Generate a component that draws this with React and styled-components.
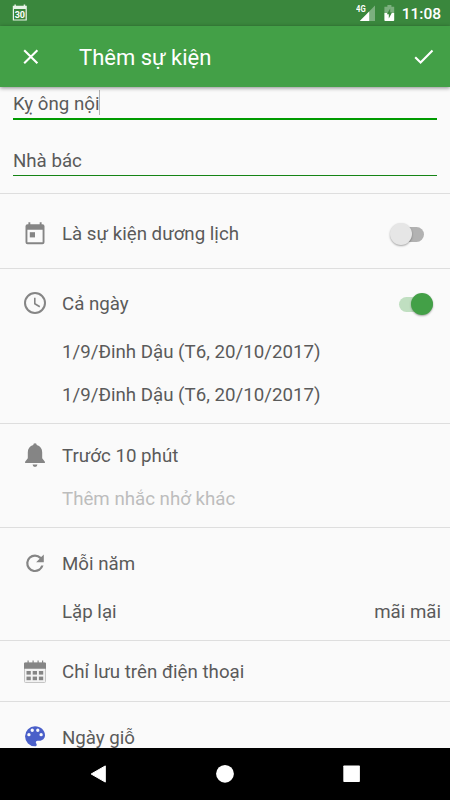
import React from "react";
import styled, { createGlobalStyle } from "styled-components";

const App = () => {
  return (
    <Screen>
      <GlobalStyle />
      <StatusBar>
        <CalendarStatusIcon />
        <StatusGroup>
          <SignalIcon />
          <BatteryIcon />
          <Clock>11:08</Clock>
        </StatusGroup>
      </StatusBar>

      <AppBar>
        <BarButton aria-label="Đóng">
          <svg width="16" height="16" viewBox="0 0 16 16">
            <path d="M1.2 1.2 14.4 14.2M14.4 1.2 1.2 14.2" stroke="#fff" strokeWidth="2.1" fill="none" />
          </svg>
        </BarButton>
        <BarTitle>Thêm sự kiện</BarTitle>
        <BarButton aria-label="Lưu">
          <svg width="20" height="16" viewBox="0 0 20 16">
            <path d="M1.2 8.2 6.6 13.5 18.5 1.6" stroke="#fff" strokeWidth="2.1" fill="none" />
          </svg>
        </BarButton>
      </AppBar>

      <Content>
        <Fields>
          <Field $height={33} $focused>
            <Text>Kỵ ông nội</Text>
            <Caret />
          </Field>
          <Field $height={56}>
            <Text>Nhà bác</Text>
          </Field>
        </Fields>

        <Section $height={75} $top={18}>
          <Row $height={44}>
            <IconSlot>
              <EventIcon />
            </IconSlot>
            <Text>Là sự kiện dương lịch</Text>
            <Switch />
          </Row>
        </Section>

        <Section $height={155} $top={13}>
          <Row $height={44}>
            <IconSlot>
              <ClockIcon />
            </IconSlot>
            <Text>Cả ngày</Text>
            <Switch $on />
          </Row>
          <Row $height={52}>
            <IconSlot />
            <Text>1/9/Đinh Dậu (T6, 20/10/2017)</Text>
          </Row>
          <Row $height={34}>
            <IconSlot />
            <Text>1/9/Đinh Dậu (T6, 20/10/2017)</Text>
          </Row>
        </Section>

        <Section $height={104} $top={9}>
          <Row $height={45}>
            <IconSlot>
              <BellIcon />
            </IconSlot>
            <Text>Trước 10 phút</Text>
          </Row>
          <Row $height={42}>
            <IconSlot />
            <Text $muted>Thêm nhắc nhở khác</Text>
          </Row>
        </Section>

        <Section $height={113} $top={13}>
          <Row $height={45}>
            <IconSlot>
              <RepeatIcon />
            </IconSlot>
            <Text>Mỗi năm</Text>
          </Row>
          <Row $height={51}>
            <IconSlot />
            <Text>Lặp lại</Text>
            <Trailing>mãi mãi</Trailing>
          </Row>
        </Section>

        <Section $height={61} $top={9}>
          <Row $height={44}>
            <IconSlot>
              <StorageIcon />
            </IconSlot>
            <Text>Chỉ lưu trên điện thoại</Text>
          </Row>
        </Section>

        <Section $height={75} $top={13}>
          <Row $height={45}>
            <IconSlot>
              <PaletteIcon />
            </IconSlot>
            <Text>Ngày giỗ</Text>
          </Row>
        </Section>
      </Content>

      <NavBar>
        <svg width="18" height="20" viewBox="0 0 18 20">
          <path d="M1.2 10 15.3 1.9v16.2z" fill="#fff" stroke="#fff" strokeWidth="1" strokeLinejoin="round" />
        </svg>
        <svg width="18" height="20" viewBox="0 0 18 20">
          <circle cx="9" cy="9.8" r="8.9" fill="#fff" />
        </svg>
        <svg width="18" height="20" viewBox="0 0 18 20">
          <rect x="1.3" y="1.4" width="16.6" height="16.6" rx="0.8" fill="#fff" />
        </svg>
      </NavBar>
    </Screen>
  );
};

// Icons
const CalendarStatusIcon = () => (
  <svg width="16" height="18" viewBox="0 0 16 18">
    <path
      d="M2.4 0.4h1.5v1.4h7.8V0.4h1.5v1.4h1.6v14.8H0.8V1.8h1.6zM2 5v10.4h11.6V5z"
      fill="#e8f3e8"
      fillRule="evenodd"
    />
    <text x="7.8" y="13.5" textAnchor="middle" fontFamily="Roboto, sans-serif" fontSize="9" fontWeight="700" fill="#fff">
      30
    </text>
  </svg>
);

const SignalIcon = () => (
  <svg width="20" height="18" viewBox="0 0 20 18">
    <path d="M19 1.5V17H3.8z" fill="#7caf7f" />
    <path d="M13.2 7.4V17H3.8z" fill="#fff" />
    <text x="0" y="8.4" fontFamily="Roboto, sans-serif" fontSize="9" fontWeight="700" fill="#fff" textLength="9.6" lengthAdjust="spacingAndGlyphs">
      4G
    </text>
  </svg>
);

const BatteryIcon = () => (
  <svg width="11" height="18" viewBox="0 0 11 18">
    <path d="M3.4 1h4v1.7h2.8V9H0.4V2.7h3z" fill="#7caf7f" />
    <path d="M0.4 9h9.8v7.2a0.8 0.8 0 0 1-.8.8H1.2a0.8 0.8 0 0 1-.8-.8z" fill="#fff" />
    <path d="M6.2 4.6 2.8 10.3h2v4.2l3.2-5.9H6.2z" fill="#3a873d" />
  </svg>
);

const EventIcon = () => (
  <svg width="22" height="24" viewBox="0 0 22 24">
    <path
      d="M4.4 0.3h1.9v2h9.4v-2h1.9v2h0.9a2 2 0 0 1 2 2v16a2 2 0 0 1-2 2h-15a2 2 0 0 1-2-2v-16a2 2 0 0 1 2-2h0.9zM3.4 7.8v12.5h15.2V7.8z"
      fill="#858585"
      fillRule="evenodd"
    />
    <rect x="5.8" y="10.2" width="5.2" height="5.2" fill="#858585" />
  </svg>
);

const ClockIcon = () => (
  <svg width="24" height="24" viewBox="0 0 24 24" fill="none" stroke="#858585">
    <circle cx="12" cy="11" r="10" strokeWidth="2" />
    <path d="M11.8 5.7v6l5 3" strokeWidth="1.6" />
  </svg>
);

const BellIcon = () => (
  <svg width="22" height="26" viewBox="0 1 22 26">
    <path
      d="M11 0.7a1.7 1.7 0 0 1 1.7 1.9C16.3 3.6 18.2 6.4 18.2 10v5.8l2.7 3.4v1.3H1.1v-1.3l2.7-3.4V10c0-3.6 1.9-6.4 5.5-7.4A1.7 1.7 0 0 1 11 0.7zM8.6 22h4.8a2.4 2.4 0 0 1-4.8 0z"
      fill="#858585"
      transform="translate(0 0.5)"
    />
  </svg>
);

const RepeatIcon = () => (
  <svg width="24" height="24" viewBox="0 0 24 24">
    <path
      d="M17.65 6.35A7.96 7.96 0 0 0 12 4a8 8 0 1 0 7.73 10h-2.08A6 6 0 1 1 12 6c1.66 0 3.14.69 4.22 1.78L13 11h7V4z"
      fill="#858585"
      transform="translate(-1.2 -1.9) scale(1.1)"
    />
  </svg>
);

const StorageIcon = () => (
  <svg width="24" height="24" viewBox="0 0 24 24">
    <rect x="1.5" y="3" width="21" height="19.5" rx="1" fill="#f2f2f2" stroke="#c4c4c4" />
    <path d="M1 8.8V3.5a1 1 0 0 1 1-1h20a1 1 0 0 1 1 1v5.3z" fill="#858585" />
    {[4.5, 9.5, 14.5, 19].map((x) => (
      <rect key={x} x={x} y="0.5" width="1.2" height="3" fill="#858585" />
    ))}
    {[3.5, 9.7, 15.9].map((x) => (
      <React.Fragment key={x}>
        <rect x={x} y="11" width="4.3" height="3.6" fill="#858585" />
        <rect x={x} y="16.6" width="4.3" height="3.6" fill="#858585" />
      </React.Fragment>
    ))}
  </svg>
);

const PaletteIcon = () => (
  <svg width="24" height="24" viewBox="0 1 24 24">
    <path
      d="M12 3a9 9 0 0 0 0 18c.83 0 1.5-.67 1.5-1.5 0-.39-.15-.74-.39-1.01-.23-.26-.38-.61-.38-.99 0-.83.67-1.5 1.5-1.5H16c2.76 0 5-2.24 5-5 0-4.42-4.03-8-9-8zm-5.5 9a1.5 1.5 0 1 1 0-3 1.5 1.5 0 0 1 0 3zm3-4a1.5 1.5 0 1 1 0-3 1.5 1.5 0 0 1 0 3zm5 0a1.5 1.5 0 1 1 0-3 1.5 1.5 0 0 1 0 3zm3 4a1.5 1.5 0 1 1 0-3 1.5 1.5 0 0 1 0 3z"
      fill="#4a5fc9"
      transform="translate(-1.3 -2) scale(1.11)"
    />
  </svg>
);

const GlobalStyle = createGlobalStyle`
  body {
    margin: 0;
    background: #fafafa;
  }

  * {
    box-sizing: border-box;
  }

  svg {
    display: block;
    flex: none;
  }
`;

const Screen = styled.div`
  display: flex;
  flex-direction: column;
  width: 450px;
  height: 800px;
  overflow: hidden;

  background: #fafafa;
  color: #5a5a5a;
  font-family: Roboto, sans-serif;
  font-size: 18.7px;
`;

const StatusBar = styled.header`
  display: flex;
  justify-content: space-between;
  align-items: center;
  height: 26px;
  padding: 0 9px 0 12px;

  background: #3a873d;
`;

const StatusGroup = styled.div`
  display: flex;
  align-items: center;

  > svg:first-child {
    margin-right: 8px;
  }
`;

const Clock = styled.span`
  margin-left: 7px;
  padding-top: 1px;

  color: #fff;
  font-size: 15.5px;
  font-weight: 500;
  line-height: 26px;
`;

const AppBar = styled.div`
  display: flex;
  align-items: center;
  position: relative;
  height: 61px;
  padding: 0 16px 0 23px;

  background: #43a047;
  box-shadow: 0 1px 4px rgba(0, 0, 0, 0.45);
`;

const BarButton = styled.button`
  padding: 0;
  border: 0;
  background: none;
`;

const BarTitle = styled.h1`
  flex: 1;
  margin: 2px 0 0 40px;

  color: #fff;
  font-size: 22px;
  font-weight: 400;
`;

const Content = styled.main`
  flex: 1;
  min-height: 0;
  overflow: hidden;
`;

const Fields = styled.section`
  height: 107px;
  padding: 0 13px;
  border-bottom: 1px solid #dedede;
`;

const Field = styled.div`
  display: flex;
  align-items: flex-end;
  height: ${(props) => props.$height}px;
  padding-bottom: 2px;
  border-bottom: ${(props) => (props.$focused ? "2px solid #009a00" : "1px solid #158415")};
`;

const Caret = styled.span`
  width: 1px;
  height: 25px;
  margin-bottom: 1px;

  background: #b5b5b5;
`;

const Section = styled.section`
  height: ${(props) => props.$height}px;
  padding: ${(props) => props.$top}px 9px 0 0;
  border-bottom: 1px solid #dedede;
`;

const Row = styled.div`
  display: flex;
  align-items: center;
  height: ${(props) => props.$height}px;
`;

const IconSlot = styled.div`
  display: flex;
  flex: none;
  justify-content: center;
  width: 54px;
  margin-right: 8px;
  padding-left: 16px;
`;

const Text = styled.span`
  color: ${(props) => (props.$muted ? "#bdbdbd" : "#5a5a5a")};
  line-height: 24px;
  white-space: nowrap;
`;

const Trailing = styled(Text)`
  margin-left: auto;
`;

const Switch = styled.span`
  display: flex;
  align-items: center;
  justify-content: ${(props) => (props.$on ? "flex-end" : "flex-start")};
  width: ${(props) => (props.$on ? 34 : 26)}px;
  height: 15px;
  margin-left: auto;
  margin-right: ${(props) => (props.$on ? 8 : 17)}px;

  background: ${(props) => (props.$on ? "#c0dfc1" : "#b2b2b2")};
  border-radius: 8px;

  &::before {
    content: "";
    flex: none;
    width: 22px;
    height: 22px;
    margin-left: ${(props) => (props.$on ? 0 : -8)}px;

    background: ${(props) => (props.$on ? "#43a047" : "#e6e6e6")};
    border-radius: 50%;
    box-shadow: 0 1px 2px rgba(0, 0, 0, 0.35);
  }
`;

const NavBar = styled.nav`
  display: flex;
  justify-content: space-between;
  align-items: center;
  height: 52px;
  padding: 0 90px;

  background: #000;
`;

export default App;
